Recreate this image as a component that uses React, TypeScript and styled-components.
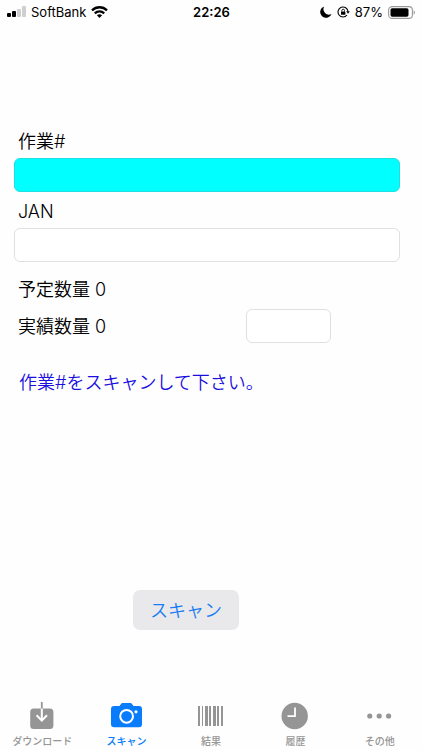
import React, { useState } from "react";
import styled, { createGlobalStyle } from "styled-components";

const GlobalStyle = createGlobalStyle`
  * { box-sizing: border-box; }
  body {
    margin: 0;
    background: #fefefe;
    color: #000;
    font-family: Inter, "Noto Sans CJK JP", sans-serif;
  }
  button, input { font: inherit; }
`;

const Screen = styled.div`
  min-height: 100vh;
  display: flex;
  flex-direction: column;
`;

const StatusBar = styled.header`
  height: 24px;
  padding: 0 6px 0 7px;
  display: grid;
  grid-template-columns: 1fr auto 1fr;
  align-items: center;
  font-size: 13px;
  line-height: 24px;
`;

const StatusGroup = styled.div<{ $end?: boolean }>`
  display: flex;
  align-items: center;
  justify-content: ${(p) => (p.$end ? "flex-end" : "flex-start")};
  gap: 5px;
`;

const Clock = styled.time`
  font-weight: 600;
`;

const Form = styled.main`
  flex: 1;
  display: flex;
  flex-direction: column;
  padding: 104px 22px 0 14px;
  font-size: 18px;
  font-weight: 350;
`;

const Label = styled.label`
  padding: 2px 0 0 4px;
  line-height: 24px;
`;

const TextBox = styled.input<{ $active?: boolean }>`
  width: 100%;
  height: 34px;
  padding: 0 8px;
  border: 1px solid ${(p) => (p.$active ? "#1fdfe2" : "#e0e0e0")};
  border-radius: 6px;
  background: ${(p) => (p.$active ? "#00ffff" : "#fff")};
  outline: none;
`;

const Field = styled.div`
  display: flex;
  flex-direction: column;
  gap: 4px;
  margin-bottom: 6px;
`;

const QuantityRow = styled.div`
  display: grid;
  grid-template-columns: 232px 85px;
  align-items: center;
  min-height: 34px;
  margin-bottom: 4px;
`;

const Planned = styled.p`
  margin: 10px 0 7px;
  padding-left: 4px;
  line-height: 24px;
`;

const Message = styled.p`
  margin: 24px 0 0;
  padding-left: 5px;
  line-height: 24px;
  color: #1a0fe0;
`;

const ScanButton = styled.button`
  align-self: flex-start;
  width: 106px;
  height: 40px;
  margin: auto 0 60px 119px;
  padding: 0 0 2px;
  border: 0;
  border-radius: 7px;
  background: #e9e9eb;
  color: #1a7cf2;
`;

const TabBar = styled.nav`
  display: grid;
  grid-template-columns: repeat(5, 1fr);
  height: 60px;
  padding-top: 10px;
`;

const Tab = styled.button<{ $active: boolean }>`
  display: flex;
  flex-direction: column;
  align-items: center;
  gap: 1px;
  padding: 0;
  border: 0;
  background: none;
  color: ${(p) => (p.$active ? "#087cfb" : "#959595")};
  font-size: 10px;
  font-weight: 500;
  line-height: 16px;
  white-space: nowrap;
`;

const Icon = styled.svg`
  display: block;
  flex: none;
`;

const SignalIcon = () => (
  <Icon width="19" height="12" viewBox="0 0 19 12" aria-hidden="true">
    <rect x="0" y="7" width="4" height="4" rx="1" />
    <rect x="5" y="5" width="4" height="6" rx="1" />
    <rect x="10" y="3" width="4" height="8" rx="1" fill="#cfcfcf" />
    <rect x="15" y="0" width="4" height="11" rx="1" fill="#cfcfcf" />
  </Icon>
);

const WifiIcon = () => (
  <Icon width="17" height="12" viewBox="0 0 17 12" aria-hidden="true">
    <g fill="none" stroke="#000" strokeWidth="2.3">
      <path d="M1 4.4C5.3.2 11.7.2 16 4.4" />
      <path d="M3.8 7.3C6.5 4.7 10.5 4.7 13.2 7.3" />
    </g>
    <path d="M8.5 12 5.9 9.3C7.4 8 9.6 8 11.1 9.3Z" />
  </Icon>
);

const MoonIcon = () => (
  <Icon width="12" height="12" viewBox="0 0 12 12" aria-hidden="true">
    <path d="M4.2.5A5.8 5.8 0 1 0 11.5 7.9 5.4 5.4 0 0 1 4.2.5Z" />
  </Icon>
);

const RotationLockIcon = () => (
  <Icon width="13" height="12" viewBox="0 0 13 12" aria-hidden="true">
    <path d="M11 5.5A5 5 0 1 0 10 9" fill="none" stroke="#000" strokeWidth="1.1" />
    <path d="M9.2 5.3h3.6L11 7.8Z" />
    <rect x="4" y="5.4" width="4.4" height="3.4" rx=".5" />
    <path d="M4.9 5.6V4.5a1.3 1.3 0 0 1 2.6 0v1.1" fill="none" stroke="#000" strokeWidth=".9" />
  </Icon>
);

const BatteryIcon = () => (
  <Icon width="28" height="13" viewBox="0 0 28 13" aria-hidden="true">
    <rect x=".6" y=".6" width="23.8" height="11.8" rx="3.5" fill="none" stroke="#9a9a9a" strokeWidth="1.1" />
    <rect x="2.5" y="2.3" width="18" height="8.4" rx="1.6" />
    <path d="M25.6 4.3c1.8.7 1.8 3.7 0 4.4Z" fill="#9a9a9a" />
  </Icon>
);

const DownloadIcon = () => (
  <Icon width="32" height="32" viewBox="0 0 32 32" aria-hidden="true">
    <rect x="4.2" y="8.5" width="23.2" height="20.5" rx="3.5" fill="currentColor" />
    <path d="M15.8 2v7" stroke="currentColor" strokeWidth="1.8" />
    <path d="M15.8 8.5v12M10.6 15.2l5.2 5.4 5.2-5.4" fill="none" stroke="#fff" strokeWidth="2" />
  </Icon>
);

const CameraIcon = () => (
  <Icon width="32" height="32" viewBox="0 0 32 32" aria-hidden="true">
    <path
      d="M3 6h5.500l1.500-2c.5-.7 1-.9 1.800-.9h7.400c.8 0 1.300.2 1.800.9L22.500 6H28c2 0 3 1 3 3v15.200c0 2-1 3-3 3H3c-2 0-3-1-3-3V9c0-2 1-3 3-3Z"
      fill="currentColor"
    />
    <circle cx="15.6" cy="16.3" r="6.4" fill="none" stroke="#fff" strokeWidth="2" />
    <circle cx="25" cy="11.8" r="1.6" fill="#fff" />
  </Icon>
);

const bars = [
  [3, 2],
  [7, 1],
  [10, 3],
  [14, 2],
  [18, 3],
  [22, 2],
  [26, 2],
];

const BarcodeIcon = () => (
  <Icon width="32" height="32" viewBox="0 0 32 32" aria-hidden="true">
    {bars.map(([x, width]) => (
      <rect key={x} x={x} y="6" width={width} height="20" fill="currentColor" />
    ))}
  </Icon>
);

const ClockIcon = () => (
  <Icon width="32" height="32" viewBox="0 0 32 32" aria-hidden="true">
    <circle cx="15.7" cy="16" r="13.2" fill="currentColor" />
    <path d="M16 7.5V16.2H8.5" fill="none" stroke="#fff" strokeWidth="1.8" />
  </Icon>
);

const MoreIcon = () => (
  <Icon width="32" height="32" viewBox="0 0 32 32" fill="currentColor" aria-hidden="true">
    <circle cx="5.8" cy="16" r="2.6" />
    <circle cx="15.2" cy="16" r="2.6" />
    <circle cx="24.6" cy="16" r="2.6" />
  </Icon>
);

const tabs = [
  { label: "ダウンロード", Glyph: DownloadIcon },
  { label: "スキャン", Glyph: CameraIcon },
  { label: "結果", Glyph: BarcodeIcon },
  { label: "履歴", Glyph: ClockIcon },
  { label: "その他", Glyph: MoreIcon },
];

export default function App() {
  const [selected, setSelected] = useState(1);

  return (
    <Screen lang="ja">
      <GlobalStyle />
      <StatusBar>
        <StatusGroup>
          <SignalIcon />
          <span>SoftBank</span>
          <WifiIcon />
        </StatusGroup>
        <Clock>22:26</Clock>
        <StatusGroup $end>
          <MoonIcon />
          <RotationLockIcon />
          <span>87%</span>
          <BatteryIcon />
        </StatusGroup>
      </StatusBar>

      <Form>
        <Field>
          <Label htmlFor="work">作業#</Label>
          <TextBox id="work" $active />
        </Field>
        <Field>
          <Label htmlFor="jan">JAN</Label>
          <TextBox id="jan" />
        </Field>
        <Planned>予定数量 0</Planned>
        <QuantityRow>
          <Label htmlFor="actual">実績数量 0</Label>
          <TextBox id="actual" inputMode="numeric" />
        </QuantityRow>
        <Message role="status">作業#をスキャンして下さい。</Message>
        <ScanButton type="button">スキャン</ScanButton>
      </Form>

      <TabBar>
        {tabs.map(({ label, Glyph }, i) => (
          <Tab
            key={label}
            type="button"
            $active={i === selected}
            aria-current={i === selected ? "page" : undefined}
            onClick={() => setSelected(i)}
          >
            <Glyph />
            {label}
          </Tab>
        ))}
      </TabBar>
    </Screen>
  );
}
